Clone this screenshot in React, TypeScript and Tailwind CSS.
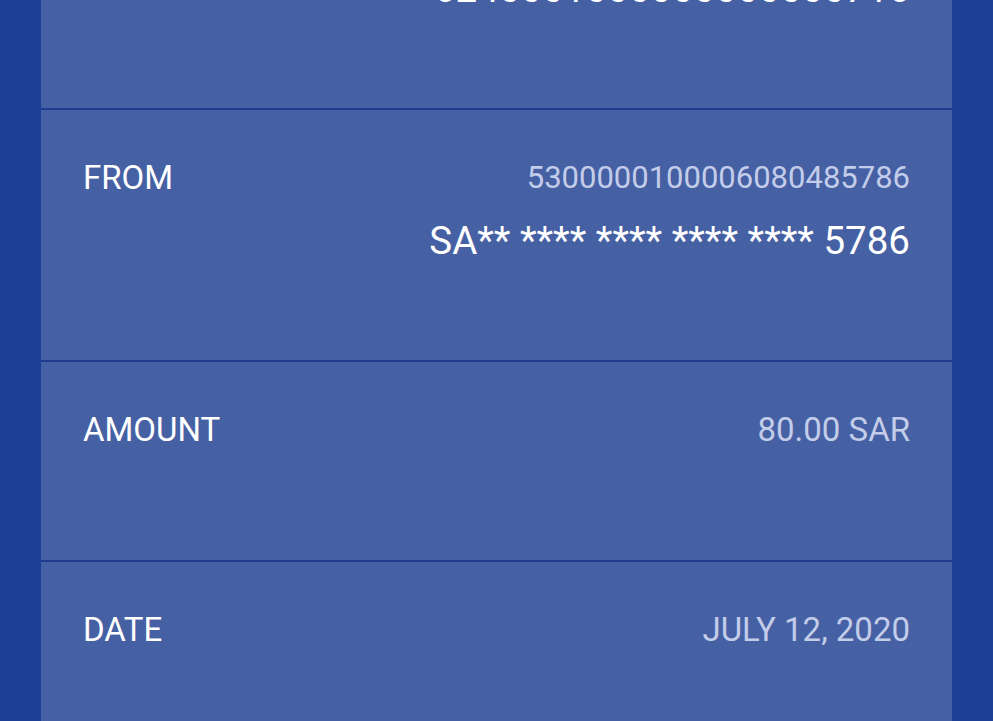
import { FC } from 'react'

type Row = {
  label: string
  value: string
  masked?: string
  tall?: boolean
}

const rows: Row[] = [
  { label: 'TO', value: '6240000100000000000716', masked: '6240001000000000000716', tall: true },
  { label: 'FROM', value: '5300000100006080485786', masked: 'SA** **** **** **** **** 5786', tall: true },
  { label: 'AMOUNT', value: '80.00 SAR' },
  { label: 'DATE', value: 'JULY 12, 2020' },
]

const DetailRow: FC<{ row: Row }> = ({ row }) => {
  return (
    <div
      className={
        (row.tall ? 'h-[252px] ' : 'h-[200px] ') +
        'border-b-2 border-[#1d3a8d] px-[42px] pt-[49px]'
      }
    >
      <div className="flex items-start justify-between">
        <span className="text-[33px] leading-[38px] text-white">{row.label}</span>
        <div className="flex flex-col items-end">
          <span
            className={
              (row.tall ? 'text-[31px] ' : 'text-[33px] ') + 'leading-[38px] text-[#c3cdea]'
            }
          >
            {row.value}
          </span>
          {row.masked && (
            <span className="mt-[22px] text-[38.5px] leading-[44px] text-white">{row.masked}</span>
          )}
        </div>
      </div>
    </div>
  )
}

export default function App() {
  return (
    <div
      className="h-[721px] w-full overflow-hidden bg-[#1c4096] px-[41px]"
      style={{ fontFamily: 'Roboto, "Noto Sans", sans-serif' }}
    >
      <div className="-mt-[142px] flex flex-col bg-[#4660a4]">
        {rows.map((row, i) => (
          <DetailRow key={i} row={row} />
        ))}
      </div>
    </div>
  )
}
